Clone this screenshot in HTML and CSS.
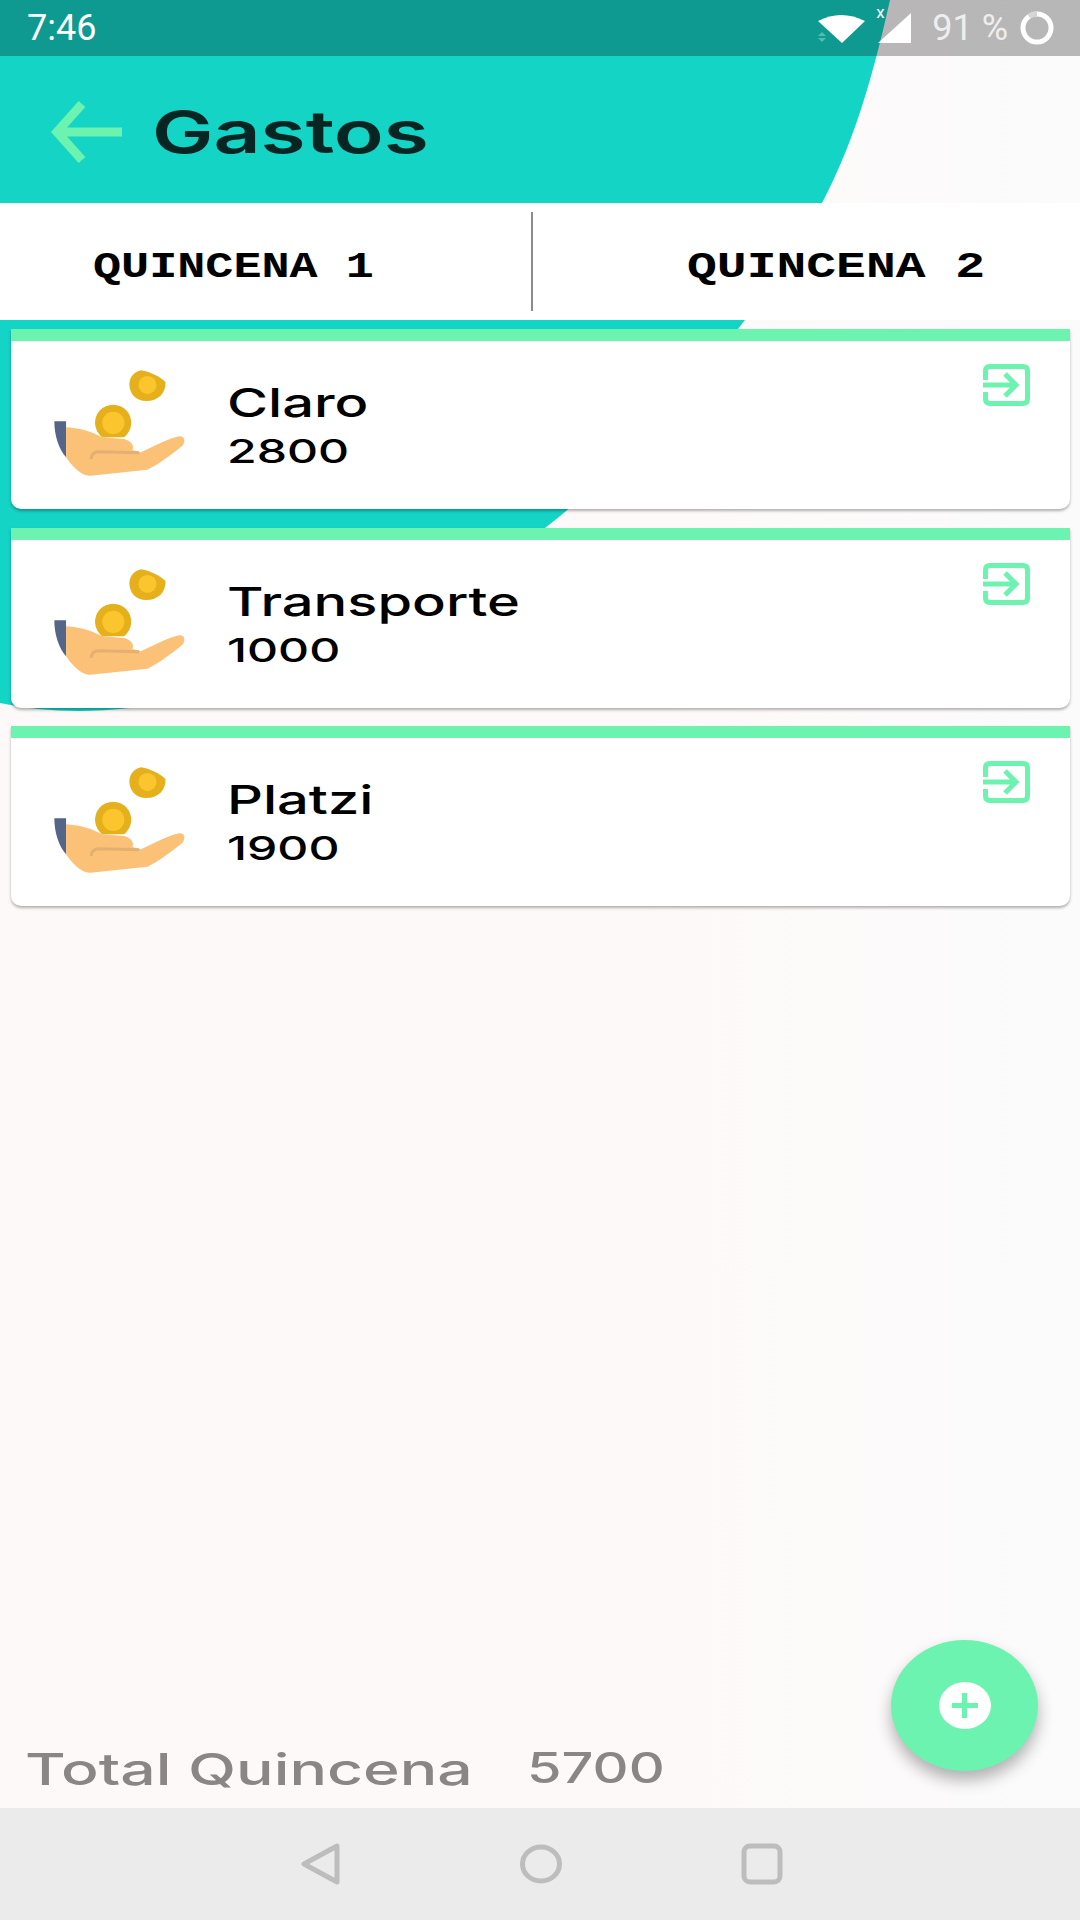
FILE: index.html
```html
<!DOCTYPE html>
<html lang="es">
<head>
  <meta charset="UTF-8" />
  <meta name="viewport" content="width=device-width, initial-scale=1.0"/>
  <title>Gastos</title>
  <link rel="stylesheet" href="styles.css">
</head>
<body>
  <svg class="blob" width="1080" height="720" viewBox="0 0 1080 720">
    <path d="M0 0H890C870 90 850 150 822 203C790 250 770 290 745 320C690 390 620 470 545 528C420 625 270 695 130 708Q60 716 0 703Z" fill="#14d4c6"/>
  </svg>

  <div class="page">
    <div class="status-bar">
      <span class="time">7:46</span>
      <div class="status-icons">
        <svg class="wifi" width="47" height="32" viewBox="0 0 47 32">
          <path d="M0 9Q23-3 47 9L24 31Z" fill="#fff"/>
          <path d="M4 20L8 24H0ZM0 26H8L4 30Z" fill="#55bdb0"/>
        </svg>
        <div class="signal">
          <span class="signal-x">x</span>
          <svg width="34" height="30" viewBox="0 0 34 30"><path d="M33 0V30H0Z" fill="#fff"/></svg>
        </div>
        <span class="battery-text">91 %</span>
        <svg width="34" height="34" viewBox="0 0 34 34">
          <circle cx="17" cy="17" r="14" fill="none" stroke="#fff" stroke-width="5"/>
          <path d="M17 3A14 14 0 0 0 9 5.500" fill="none" stroke="#d6d6d6" stroke-width="5"/>
        </svg>
      </div>
    </div>

    <header class="app-bar">
      <svg width="72" height="62" viewBox="0 0 72 62">
        <path d="M31 3L6 31L31 59M6 31H71" fill="none" stroke="#6cf3b0" stroke-width="9"/>
      </svg>
      <h1 class="title">Gastos</h1>
    </header>

    <nav class="tabs">
      <div class="tab tab-first"><span class="tab-label">QUINCENA 1</span></div>
      <div class="tab tab-second"><span class="tab-label">QUINCENA 2</span></div>
    </nav>

    <main class="list">
      <div class="card">
        <svg class="hand" width="134" height="110" viewBox="150 175 400 325"><use href="#hand-coins"/></svg>
        <div class="card-text">
          <span class="card-name">Claro</span>
          <span class="card-value">2800</span>
        </div>
        <svg class="exit" width="47" height="42" viewBox="0 0 47 42"><use href="#exit-icon"/></svg>
      </div>
      <div class="card">
        <svg class="hand" width="134" height="110" viewBox="150 175 400 325"><use href="#hand-coins"/></svg>
        <div class="card-text">
          <span class="card-name">Transporte</span>
          <span class="card-value">1000</span>
        </div>
        <svg class="exit" width="47" height="42" viewBox="0 0 47 42"><use href="#exit-icon"/></svg>
      </div>
      <div class="card">
        <svg class="hand" width="134" height="110" viewBox="150 175 400 325"><use href="#hand-coins"/></svg>
        <div class="card-text">
          <span class="card-name">Platzi</span>
          <span class="card-value">1900</span>
        </div>
        <svg class="exit" width="47" height="42" viewBox="0 0 47 42"><use href="#exit-icon"/></svg>
      </div>
    </main>

    <div class="total">
      <span class="total-label">Total Quincena</span>
      <span class="total-value">5700</span>
    </div>

    <div class="nav-bar">
      <svg width="42" height="42" viewBox="0 0 42 42">
        <path d="M38 3V39L5 21Z" fill="none" stroke="#bdbdbd" stroke-width="5" stroke-linejoin="round"/>
      </svg>
      <svg width="42" height="42" viewBox="0 0 42 42"><ellipse cx="21" cy="21" rx="18.500" ry="17" fill="none" stroke="#bdbdbd" stroke-width="5"/></svg>
      <svg width="42" height="42" viewBox="0 0 42 42"><rect x="3" y="3" width="36" height="36" rx="6" fill="none" stroke="#bdbdbd" stroke-width="5"/></svg>
    </div>
  </div>

  <div class="fab">
    <span class="fab-plus"></span>
  </div>

  <svg class="defs" width="0" height="0">
    <defs>
      <g id="hand-coins">
        <path d="M157 332H192V440C170 415 157 375 157 332Z" fill="#546588"/>
        <path d="M192 350C240 352 270 365 300 380L365 385C385 390 397 405 390 418L415 425C450 410 490 385 530 377C545 376 550 390 540 405C510 430 470 460 435 477L265 495C250 496 240 490 225 478C210 465 200 452 192 440Z" fill="#fbc177"/>
        <path d="M267 445Q267 423 292 423L410 426" fill="none" stroke="#e3b071" stroke-width="9"/>
        <path d="M300 380A54 54 0 1 1 365 380Z" fill="#e5b01c"/>
        <circle cx="333" cy="337" r="33" fill="#fbc52d"/>
        <path d="M416 180C445 185 475 200 489 216C490 250 465 272 432 272C400 272 381 250 381 222C381 200 395 185 416 180Z" fill="#e5b01c"/>
        <circle cx="435" cy="224" r="27" fill="#fbc52d"/>
      </g>
      <g id="exit-icon" fill="none" stroke="#6cf3b0" stroke-width="5">
        <path d="M2.500 16V7Q2.500 2.500 7 2.500H40Q44.500 2.500 44.500 7V35Q44.500 39.500 40 39.500H7Q2.500 39.500 2.500 35V28"/>
        <path d="M0 21H33M22 10L33 21L22 32"/>
      </g>
    </defs>
  </svg>
</body>
</html>
```

FILE: styles.css
```css
* {
  box-sizing: border-box;
}

body {
  margin: 0;
  width: 1080px;
  height: 1920px;
  overflow: hidden;
  position: relative;
  font-family: "Liberation Sans", Arial, sans-serif;
  background: linear-gradient(90deg, #fef9f9 0%, #fef9f9 60%, #fbfbfb 100%);
  color: #000;
}

.blob {
  position: absolute;
  top: 0;
  left: 0;
}

.defs {
  position: absolute;
}

.page {
  position: relative;
  height: 1920px;
  display: flex;
  flex-direction: column;
}

.status-bar {
  height: 56px;
  padding: 0 26px 0 27px;
  display: flex;
  justify-content: space-between;
  align-items: center;
  background: rgba(0, 0, 0, 0.27);
  color: #fff;
}

.time {
  font-family: Roboto, sans-serif;
  font-size: 36px;
}

.status-icons {
  display: flex;
  align-items: center;
}

.wifi {
  margin-right: 13px;
}

.signal {
  position: relative;
  display: flex;
}

.signal-x {
  position: absolute;
  left: -2px;
  top: -11px;
  font-family: Roboto, sans-serif;
  font-size: 17px;
}

.battery-text {
  margin: 0 12px 0 20px;
  font-family: Roboto, sans-serif;
  font-size: 36px;
  color: #eeeeee;
}

.app-bar {
  height: 147px;
  padding: 4px 0 0 51px;
  display: flex;
  align-items: center;
}

.title {
  margin: 0 0 0 29px;
  font-family: Inter, sans-serif;
  font-size: 58px;
  font-weight: 600;
  color: #062523;
  transform: scaleX(1.415);
  transform-origin: left;
}

.tabs {
  height: 117px;
  display: flex;
  background: #fff;
  padding: 9px 0 9px;
}

.tab {
  display: flex;
  align-items: center;
}

.tab-first {
  width: 533px;
  padding-left: 93px;
  border-right: 2px solid #8c8c8c;
}

.tab-second {
  padding-left: 154px;
}

.tab-label {
  display: inline-block;
  margin-top: 12px;
  font-family: "Liberation Mono", monospace;
  font-size: 36px;
  font-weight: 700;
  transform: scaleX(1.3);
  transform-origin: left;
}

.tab-second .tab-label {
  transform: scaleX(1.38);
}

.list {
  flex: 1;
  padding: 9px 10px 0 11px;
  display: flex;
  flex-direction: column;
  gap: 18.5px;
}

.card {
  position: relative;
  height: 180px;
  padding: 27px 0 0 41px;
  display: flex;
  background: #fff;
  border-top: 12px solid #6cf3b0;
  border-radius: 0 0 10px 10px;
  box-shadow: 0 2px 3px rgba(0, 0, 0, 0.3);
}

.card-text {
  margin-left: 41px;
  margin-top: 11px;
  display: flex;
  flex-direction: column;
  align-items: flex-start;
}

.card-name {
  font-family: Inter, sans-serif;
  font-size: 40px;
  line-height: 48px;
  font-weight: 500;
  transform: scaleX(1.4);
  transform-origin: left;
}

.card-value {
  font-family: Inter, sans-serif;
  font-size: 33px;
  line-height: 48px;
  font-weight: 500;
  transform: scaleX(1.46);
  transform-origin: left;
}

.exit {
  position: absolute;
  top: 23px;
  right: 40px;
}

.total {
  height: 72px;
  padding: 8px 0 0 25px;
  display: flex;
  align-items: flex-start;
  color: #8a8686;
  font-family: Inter, sans-serif;
  font-weight: 500;
}

.total-label {
  font-size: 44px;
  line-height: 50px;
  transform: scaleX(1.42);
  transform-origin: left;
  width: 502px;
}

.total-value {
  font-size: 42px;
  line-height: 48px;
  transform: scaleX(1.33);
  transform-origin: left;
}

.nav-bar {
  height: 112px;
  padding: 0 297px 0 299px;
  display: flex;
  justify-content: space-between;
  align-items: center;
  background: #ebebeb;
}

.fab {
  position: absolute;
  left: 891px;
  top: 1640px;
  width: 147px;
  height: 131px;
  display: flex;
  justify-content: center;
  align-items: center;
  border-radius: 50%;
  background: #6cf3b0;
  box-shadow: 0 9px 16px rgba(0, 0, 0, 0.3);
}

.fab-plus {
  position: relative;
  width: 52px;
  height: 47px;
  border-radius: 50%;
  background: #fff;
}

.fab-plus::before,
.fab-plus::after {
  content: "";
  position: absolute;
  background: #6cf3b0;
}

.fab-plus::before {
  left: 13px;
  top: 21px;
  width: 26px;
  height: 5px;
}

.fab-plus::after {
  left: 23px;
  top: 11px;
  width: 5px;
  height: 25px;
}
```
